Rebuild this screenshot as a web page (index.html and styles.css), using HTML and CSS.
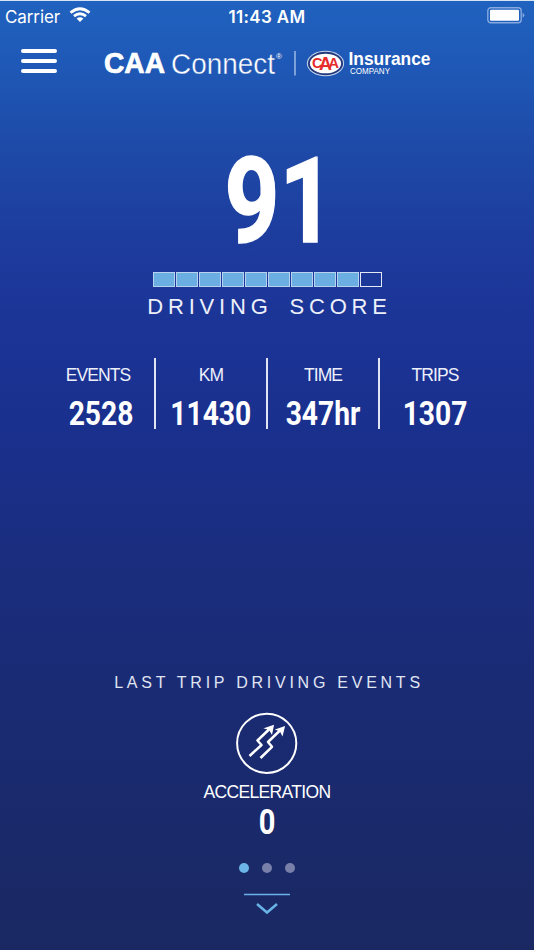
FILE: index.html
```html
<!DOCTYPE html>
<html lang="en">
<head>
<meta charset="utf-8">
<title>CAA Connect</title>
<link rel="stylesheet" href="styles.css">
</head>
<body>
<main class="screen">
  <header class="status">
    <div class="carrier"><span>Carrier</span>
      <svg class="wifi" width="22" height="16" viewBox="0 0 22 16"><g fill="none" stroke="#fff" stroke-width="2.8"><path d="M1.5 5.6Q11-2.2 20.5 5.6"/><path d="M5 9.1Q11 4.3 17 9.1"/></g><path d="M7.6 11.6Q11 9 14.4 11.6L11 15Z" fill="#fff"/></svg>
    </div>
    <time class="clock">11:43 AM</time>
    <svg class="battery" width="38" height="17" viewBox="0 0 38 17"><rect x=".8" y=".8" width="33.4" height="15" rx="3" fill="none" stroke="#86a9df" stroke-width="1.4"/><rect x="3" y="2.8" width="29" height="11" rx="1" fill="#fff"/><path d="M35.6 6Q37.3 6.4 37.3 8.3T35.6 10.6Z" fill="#86a9df"/></svg>
  </header>
  <nav class="nav">
    <div class="menu"><i></i><i></i><i></i></div>
    <svg class="brand" width="330" height="34" viewBox="0 0 330 34">
      <g fill="#fff">
        <text class="caa" x="0" y="26" textLength="61" lengthAdjust="spacingAndGlyphs">CAA</text>
        <text class="connect" x="67" y="26.5" textLength="104" lengthAdjust="spacingAndGlyphs">Connect</text>
        <text class="reg" x="172" y="12">®</text>
        <text class="insurance" x="244.5" y="17.5" textLength="82" lengthAdjust="spacingAndGlyphs">Insurance</text>
        <text class="company" x="246" y="27.3" textLength="40" lengthAdjust="spacingAndGlyphs">COMPANY</text>
      </g>
      <path d="M191 4V28.5" stroke="#a5c0e7" stroke-width="1.4"/>
      <ellipse cx="221.5" cy="16.5" rx="18.6" ry="12.7" fill="#c7d8ee"/>
      <ellipse cx="221.5" cy="16.5" rx="17.6" ry="11.7" fill="#243a7d"/>
      <ellipse cx="221.5" cy="16.5" rx="15.6" ry="9.8" fill="#fff"/>
      <g class="emblem"><text x="208" y="21" font-size="14" textLength="10.5" lengthAdjust="spacingAndGlyphs">C</text><text x="224.5" y="21" font-size="14" textLength="10.5" lengthAdjust="spacingAndGlyphs">A</text><text x="215" y="23" font-size="19" textLength="13" lengthAdjust="spacingAndGlyphs">A</text></g>
    </svg>
  </nav>
  <section class="score">
    <svg class="number" width="120" height="96" viewBox="0 0 120 96"><text x="9.5" y="91" textLength="110" lengthAdjust="spacingAndGlyphs">91</text></svg>
    <div class="meter"><i></i><i></i><i></i><i></i><i></i><i></i><i></i><i></i><i></i><i class="empty"></i></div>
    <h1>DRIVING SCORE</h1>
  </section>
  <section class="stats">
    <div><span>EVENTS</span><b class="shift">2528</b></div>
    <div><span>KM</span><b>11430</b></div>
    <div><span>TIME</span><b>347hr</b></div>
    <div><span>TRIPS</span><b>1307</b></div>
  </section>
  <section class="last">
    <h2>LAST TRIP DRIVING EVENTS</h2>
    <svg class="accel" width="64" height="64" viewBox="0 0 64 64" fill="none" stroke="#fff"><circle cx="31.7" cy="32.3" r="29.6" stroke-width="2"/><g stroke-width="2.5" stroke-linejoin="round"><path d="M14.5 45L26.500 34L22.500 29.500L36 16.500"/><path d="M25.500 47L37 35.800L33 31L46.500 18"/></g><path d="M30.500 17.300L38.200 14.800L36.700 22.200L34.500 18.500ZM41.700 18.500L49.200 16L47.300 23.600L45.300 19.800Z" fill="#fff" stroke-width="1.3"/></svg>
    <span class="name">ACCELERATION</span>
    <b>0</b>
    <div class="dots"><i class="on"></i><i></i><i></i></div>
    <svg class="more" width="46" height="24" viewBox="0 0 46 24" fill="none" stroke="#69b2e5"><path d="M0 1.500H46" stroke-width="1.400"/><path d="M13 11L23 19.500L33 11" stroke-width="2.500"/></svg>
  </section>
</main>
</body>
</html>
```
FILE: styles.css
```css
* { box-sizing: border-box; }
body { margin: 0; font-family: "Liberation Sans", Arial, sans-serif; color: #fff; }
.screen {
  height: 950px;
  display: flex;
  flex-direction: column;
  border-top: 1px solid #d5e3f3;
  background: linear-gradient(#2062bf 0, #1f59b7 60px, #1e4ba9 140px, #1d3c9d 240px, #1b3496 325px, #1a308e 420px, #1a2d7e 560px, #1a2b74 690px, #1a2969 850px, #1a2862 950px);
}
.status {
  height: 32px;
  padding: 0 9px 0 5px;
  display: grid;
  grid-template-columns: 1fr auto 1fr;
  font-family: Inter, sans-serif;
  font-size: 17px;
  line-height: 32px;
}
.carrier { display: flex; gap: 9px; letter-spacing: -.1px; }
.wifi { margin-top: 6px; }
.clock { font-weight: 600; letter-spacing: .35px; margin-left: 4px; }
.battery { justify-self: end; margin-top: 6px; }
.nav { height: 59px; display: flex; }
.menu { width: 36px; margin: 16px 46.5px 0 21.4px; display: flex; flex-direction: column; gap: 6px; }
.menu i { height: 4px; border-radius: 2px; background: #fff; }
.brand { margin-top: 14px; }
.caa { font-size: 29px; font-weight: 700; stroke: #fff; stroke-width: .7px; }
.connect { font-size: 29.5px; stroke: #1f57b6; stroke-width: .4px; }
.reg { font-size: 8px; }
.insurance { font-size: 17.5px; font-weight: 700; }
.company { font-size: 8.5px; }
.emblem { font-weight: 700; fill: #e52b2b; }
.score { height: 266px; display: flex; flex-direction: column; align-items: center; padding-top: 59px; }
.number { margin-left: 16px; flex: none; overflow: visible; fill: #fff; stroke: #fff; stroke-width: 1.5px; font-family: Roboto, sans-serif; font-size: 118px; font-weight: 700; }
.meter { display: flex; gap: 1px; margin-top: 25px; }
.meter i { width: 22px; height: 15px; border: 1px solid #b7d2ef; background: #6bafe2; }
.meter .empty { border: 1.5px solid #e3e8f5; background: none; }
h1 { margin: 7px 0 0 5px; font-size: 22px; line-height: 26px; font-weight: 400; letter-spacing: 4.8px; word-spacing: 6px; white-space: nowrap; color: #edf0fa; }
.stats { height: 71px; display: flex; justify-content: center; margin-right: 2px; }
.stats div { width: 112px; display: flex; flex-direction: column; align-items: center; }
.stats div + div { border-left: 2px solid #dfe5f5; }
.stats span { margin-top: 7px; font-size: 17.5px; line-height: 20px; letter-spacing: -.9px; color: #edf0fa; }
.stats b { margin-top: 9px; font-family: Roboto, sans-serif; font-size: 34px; line-height: 38px; transform: scaleX(.83); }
.stats .shift { margin-left: 6px; }
.last { display: flex; flex-direction: column; align-items: center; padding-top: 245px; }
h2 { margin: 0 0 0 4px; font-size: 16px; line-height: 18px; font-weight: 400; letter-spacing: 3.75px; white-space: nowrap; color: #e0e5f2; }
.accel { margin-top: 19px; }
.name { margin-top: 7px; font-size: 17.5px; line-height: 20px; letter-spacing: -.65px; }
.last b { margin-top: 2px; font-family: Roboto, sans-serif; font-size: 35px; line-height: 38px; transform: scaleX(.83); }
.dots { display: flex; gap: 13px; margin-top: 21px; }
.dots i { width: 10px; height: 10px; border-radius: 50%; background: #7880aa; }
.dots .on { background: #6bb5e8; }
.more { margin-top: 20px; }
```
